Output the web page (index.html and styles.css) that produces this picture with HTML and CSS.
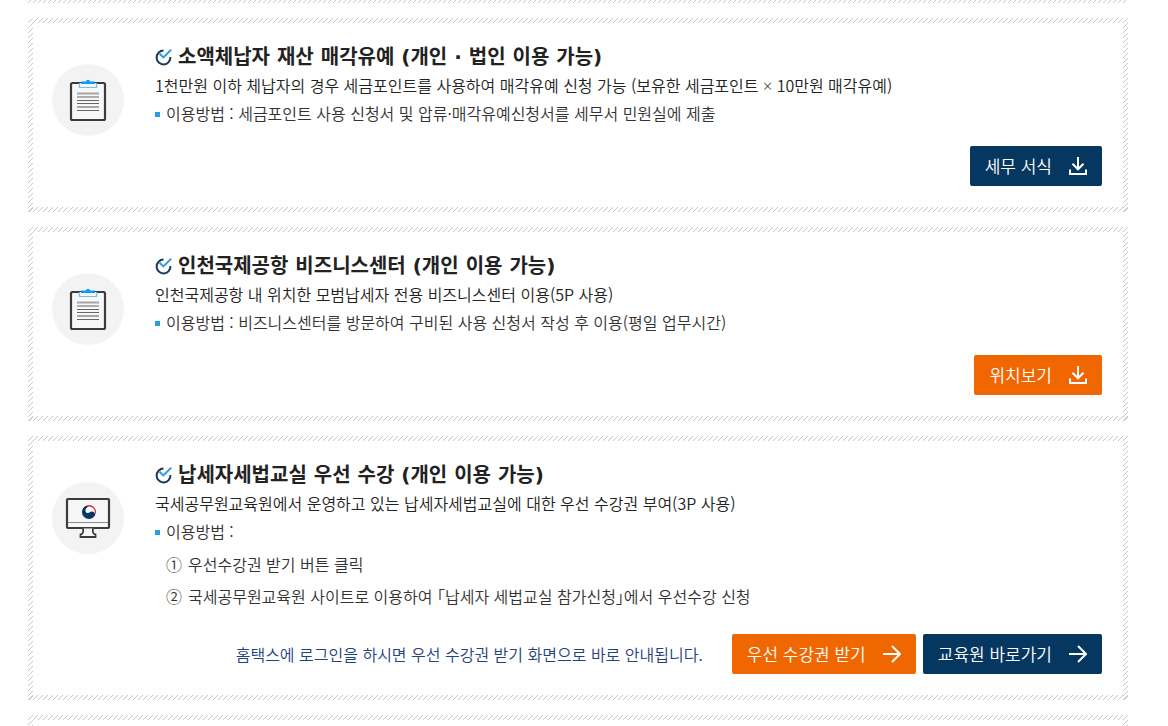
FILE: index.html
```html
<!DOCTYPE html>
<html lang="ko">
<head>
<meta charset="utf-8">
<title>세금포인트 사용 혜택</title>
<link rel="stylesheet" href="styles.css">
</head>
<body>
<svg class="symbols" aria-hidden="true">
  <symbol id="check" viewBox="0 0 18 18">
    <path d="M8.5 2.6A6.9 6.9 0 1 0 15.4 9" fill="none" stroke="#1c3a5a" stroke-width="2"/>
    <path d="M4.6 5.8L8.4 9.4L16.2 1.6" fill="none" stroke="#2e9be0" stroke-width="2"/>
  </symbol>
  <symbol id="clipboard" viewBox="0 0 72 72">
    <rect x="19" y="19" width="34" height="37" rx="1.5" fill="#f7f7f7" stroke="#3c3c3c" stroke-width="2.2"/>
    <path d="M27.5 19V23.5H44.5V19" fill="#f7f7f7" stroke="#6fc0f7" stroke-width="1.2"/>
    <path d="M29 20V17.6H34Q34 15.8 36 15.8T38 17.6H43V20Z" fill="#0c9bf5"/>
    <path d="M25 29.5H47M25 43H47" stroke="#a6a6a6" stroke-width="2"/>
    <path d="M25 33H47M25 36.5H47M25 39.5H47M25 46.5H47" stroke="#666" stroke-width="1"/>
  </symbol>
  <symbol id="monitor" viewBox="0 0 72 72">
    <rect x="15" y="17" width="42" height="29" rx="1" fill="#f7f7f7" stroke="#3c3c3c" stroke-width="2.2"/>
    <path d="M16 40.5H56" stroke="#8a8a8a" stroke-width="1"/>
    <path d="M31 46.5Q32 52 28.5 52.5V55H43.5V52.5Q40 52 41 46.5" fill="#f7f7f7" stroke="#3c3c3c" stroke-width="1.8"/>
    <circle cx="37" cy="30" r="7" fill="#fff"/>
    <path d="M34 23.7A7 7 0 0 1 43.2 33.2Q43.8 28 40.6 25.8Q37.6 23.8 34 25Z" fill="#e0213f"/>
    <path d="M33.4 24A7 7 0 1 0 43 33.6Q43.6 30.6 41.2 29.8Q39 29.2 37.4 30.6Q35.8 31.6 34.2 30.4Q32.4 28.6 34.6 26Q35.4 25 37 24.6Q35 23.6 33.4 24Z" fill="#0b3767"/>
  </symbol>
  <symbol id="download" viewBox="0 0 18 18">
    <path d="M9 0V12M3.5 6.8L9 12.3L14.5 6.8M1 12.5V17H17V12.5" fill="none" stroke="#fff" stroke-width="2"/>
  </symbol>
  <symbol id="arrow" viewBox="0 0 18 18">
    <path d="M0 9H17M9 1L17 9L9 17" fill="none" stroke="#fff" stroke-width="2"/>
  </symbol>
</svg>
<main class="page">
  <div class="card card-previous"></div>

  <section class="card">
    <div class="badge"><svg><use href="#clipboard"/></svg></div>
    <div class="content">
      <h2 class="title"><svg class="title-icon"><use href="#check"/></svg>소액체납자 재산 매각유예 (개인 · 법인 이용 가능)</h2>
      <p class="summary">1천만원 이하 체납자의 경우 세금포인트를 사용하여 매각유예 신청 가능 (보유한 세금포인트 <span class="times">×</span> 10만원 매각유예)</p>
      <ul class="methods"><li>이용방법 : 세금포인트 사용 신청서 및 압류·매각유예신청서를 세무서 민원실에 제출</li></ul>
      <div class="actions"><a class="button navy" href="#forms">세무 서식<svg><use href="#download"/></svg></a></div>
    </div>
  </section>

  <section class="card">
    <div class="badge"><svg><use href="#clipboard"/></svg></div>
    <div class="content">
      <h2 class="title"><svg class="title-icon"><use href="#check"/></svg>인천국제공항 비즈니스센터 (개인 이용 가능)</h2>
      <p class="summary">인천국제공항 내 위치한 모범납세자 전용 비즈니스센터 이용(5P 사용)</p>
      <ul class="methods"><li>이용방법 : 비즈니스센터를 방문하여 구비된 사용 신청서 작성 후 이용(평일 업무시간)</li></ul>
      <div class="actions"><a class="button orange" href="#location">위치보기<svg><use href="#download"/></svg></a></div>
    </div>
  </section>

  <section class="card">
    <div class="badge"><svg><use href="#monitor"/></svg></div>
    <div class="content">
      <h2 class="title"><svg class="title-icon"><use href="#check"/></svg>납세자세법교실 우선 수강 (개인 이용 가능)</h2>
      <p class="summary">국세공무원교육원에서 운영하고 있는 납세자세법교실에 대한 우선 수강권 부여(3P 사용)</p>
      <ul class="methods">
        <li>이용방법 :
          <ol class="steps">
            <li><span class="number">①</span>우선수강권 받기 버튼 클릭</li>
            <li><span class="number">②</span>국세공무원교육원 사이트로 이용하여 ｢납세자 세법교실 참가신청｣에서 우선수강 신청</li>
          </ol>
        </li>
      </ul>
      <div class="actions">
        <p class="note">홈택스에 로그인을 하시면 우선 수강권 받기 화면으로 바로 안내됩니다.</p>
        <a class="button orange" href="#coupon">우선 수강권 받기<svg><use href="#arrow"/></svg></a>
        <a class="button navy" href="#institute">교육원 바로가기<svg><use href="#arrow"/></svg></a>
      </div>
    </div>
  </section>

  <div class="card card-next"></div>
</main>
</body>
</html>
```

FILE: styles.css
```css
* {
  box-sizing: border-box;
}

body {
  margin: 0;
  background: #fff;
  color: #222;
  font-family: "Noto Sans CJK KR", sans-serif;
  font-size: 16px;
  font-weight: 350;
  line-height: 28px;
}

h2, p, ul, ol {
  margin: 0;
  padding: 0;
}

ul, ol {
  list-style: none;
}

.symbols {
  display: none;
}

.page {
  display: flex;
  flex-direction: column;
  gap: 15px;
  min-height: 100vh;
  padding: 0 40px 0 28px;
}

/* Hatched frame: one 5px diagonal tile repeated along each edge */
.card {
  --hatch: url("data:image/svg+xml,%3Csvg xmlns='http://www.w3.org/2000/svg' width='5' height='5' shape-rendering='crispEdges'%3E%3Cpath d='M4 0h1v1h-1zM3 1h1v1h-1zM2 2h1v1h-1zM1 3h1v1h-1zM0 4h1v1h-1z' fill='%23c6c8d6'/%3E%3C/svg%3E");
  display: flex;
  align-items: flex-start;
  gap: 31px;
  padding: 25px 26px 26px 24px;
  background:
    var(--hatch) left top repeat-x,
    var(--hatch) left bottom repeat-x,
    var(--hatch) left top repeat-y,
    var(--hatch) right top repeat-y;
}

.card-previous {
  height: 3px;
  padding: 0;
  background: var(--hatch) left bottom repeat-x;
}

.card-next {
  flex: 1;
  padding: 0;
  background:
    var(--hatch) left top repeat-x,
    var(--hatch) left top repeat-y,
    var(--hatch) right top repeat-y;
}

.badge {
  flex: none;
  width: 72px;
  height: 72px;
  margin-top: 21px;
  border-radius: 50%;
  background: #f3f3f3;
}

.badge svg {
  display: block;
  width: 72px;
  height: 72px;
}

.content {
  flex: 1;
  min-width: 0;
}

.title {
  display: flex;
  align-items: center;
  gap: 5px;
  font-family: "DejaVu Sans", "Noto Sans CJK KR", sans-serif;
  font-size: 20px;
  font-weight: 700;
  line-height: 28px;
}

.title-icon {
  flex: none;
  width: 18px;
  height: 18px;
}

.times {
  font-family: "Open Sans", sans-serif;
  line-height: 1;
}

.methods > li {
  padding-left: 11px;
  background: linear-gradient(#2e9be0, #2e9be0) 0 13px / 5px 5px no-repeat;
  color: #333;
}

.steps {
  padding: 3px 0;
  line-height: 32px;
}

.steps li {
  display: flex;
  gap: 6px;
}

.actions {
  display: flex;
  align-items: center;
  justify-content: flex-end;
  gap: 7px;
  margin-top: 19px;
}

.note {
  margin-right: 22px;
  color: #1f4280;
}

.button {
  display: flex;
  align-items: center;
  gap: 17px;
  height: 40px;
  padding: 0 15px;
  border-radius: 2px;
  color: #fff;
  font-size: 17px;
  text-decoration: none;
}

.button svg {
  width: 18px;
  height: 18px;
}

.navy {
  background: #063761;
}

.orange {
  background: #f06600;
}
```
